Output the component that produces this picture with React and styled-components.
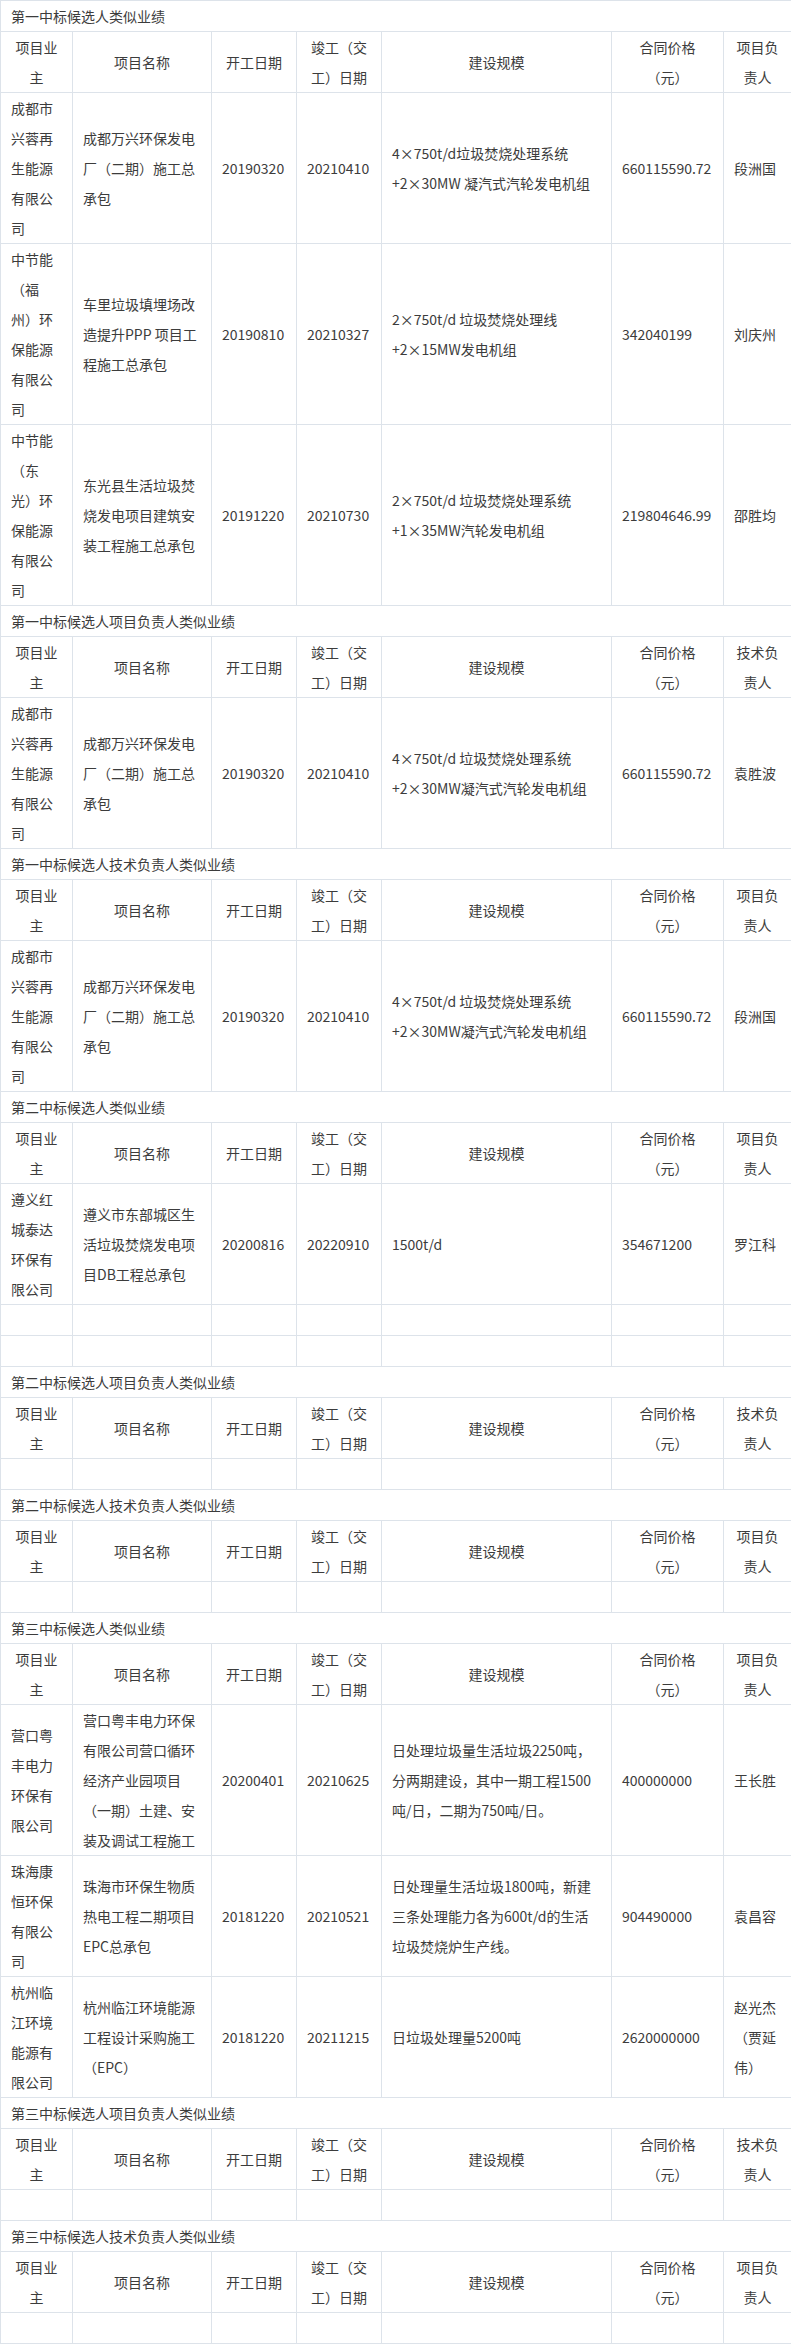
import React from "react";
import styled, { createGlobalStyle } from "styled-components";

const GlobalStyle = createGlobalStyle`
  body {
    margin: 0;
    background: #ffffff;
  }
`;

const Sheet = styled.table`
  width: 791px;
  table-layout: fixed;
  border-collapse: collapse;
  font-family: "Noto Sans CJK SC", "Noto Sans", sans-serif;
  font-size: 14px;
  line-height: 30px;
  color: #3c3c3c;
  background: #ffffff;
`;

const Col = styled.col`
  width: ${(props) => props.$w}px;
`;

const Cell = styled.td`
  border: 1px solid #dde3ea;
  padding: 0 10px;
  vertical-align: middle;
  text-align: ${(props) => (props.$head ? "center" : "left")};
`;

const TitleCell = styled.td`
  border: 1px solid #dde3ea;
  padding: 0 10px;
  height: 30px;
  text-align: left;
  white-space: nowrap;
`;

const BlankCell = styled.td`
  border: 1px solid #dde3ea;
  height: 30px;
  padding: 0;
`;

const WIDTHS = [72, 139, 85, 85, 230, 112, 68];

const Lines = ({ lines }) =>
  lines.map((line, i) => (
    <React.Fragment key={i}>
      {i > 0 && <br />}
      {line}
    </React.Fragment>
  ));

const HeadRow = ({ lead }) => {
  const heads = [
    ["项目业", "主"],
    ["项目名称"],
    ["开工日期"],
    ["竣工（交", "工）日期"],
    ["建设规模"],
    ["合同价格", "（元）"],
    [lead, "责人"],
  ];
  return (
    <tr>
      {heads.map((h, i) => (
        <Cell key={i} $head>
          <Lines lines={h} />
        </Cell>
      ))}
    </tr>
  );
};

const DataRow = ({ row }) => (
  <tr>
    <Cell>
      <Lines lines={row.owner} />
    </Cell>
    <Cell>
      <Lines lines={row.name} />
    </Cell>
    <Cell>{row.start}</Cell>
    <Cell>{row.end}</Cell>
    <Cell>
      <Lines lines={row.scale} />
    </Cell>
    <Cell>{row.price}</Cell>
    <Cell>
      <Lines lines={row.person} />
    </Cell>
  </tr>
);

const BlankRow = () => (
  <tr>
    {WIDTHS.map((w, i) => (
      <BlankCell key={i} />
    ))}
  </tr>
);

const chengdu = {
  owner: ["成都市", "兴蓉再", "生能源", "有限公", "司"],
  name: ["成都万兴环保发电", "厂（二期）施工总", "承包"],
  start: "20190320",
  end: "20210410",
  price: "660115590.72",
};

const sections = [
  {
    title: "第一中标候选人类似业绩",
    lead: "项目负",
    rows: [
      {
        ...chengdu,
        scale: ["4×750t/d垃圾焚烧处理系统", "+2×30MW 凝汽式汽轮发电机组"],
        person: ["段洲国"],
      },
      {
        owner: ["中节能", "（福", "州）环", "保能源", "有限公", "司"],
        name: ["车里垃圾填埋场改", "造提升PPP 项目工", "程施工总承包"],
        start: "20190810",
        end: "20210327",
        scale: ["2×750t/d 垃圾焚烧处理线", "+2×15MW发电机组"],
        price: "342040199",
        person: ["刘庆州"],
      },
      {
        owner: ["中节能", "（东", "光）环", "保能源", "有限公", "司"],
        name: ["东光县生活垃圾焚", "烧发电项目建筑安", "装工程施工总承包"],
        start: "20191220",
        end: "20210730",
        scale: ["2×750t/d 垃圾焚烧处理系统", "+1×35MW汽轮发电机组"],
        price: "219804646.99",
        person: ["邵胜均"],
      },
    ],
    blanks: 0,
  },
  {
    title: "第一中标候选人项目负责人类似业绩",
    lead: "技术负",
    rows: [
      {
        ...chengdu,
        scale: ["4×750t/d 垃圾焚烧处理系统", "+2×30MW凝汽式汽轮发电机组"],
        person: ["袁胜波"],
      },
    ],
    blanks: 0,
  },
  {
    title: "第一中标候选人技术负责人类似业绩",
    lead: "项目负",
    rows: [
      {
        ...chengdu,
        scale: ["4×750t/d 垃圾焚烧处理系统", "+2×30MW凝汽式汽轮发电机组"],
        person: ["段洲国"],
      },
    ],
    blanks: 0,
  },
  {
    title: "第二中标候选人类似业绩",
    lead: "项目负",
    rows: [
      {
        owner: ["遵义红", "城泰达", "环保有", "限公司"],
        name: ["遵义市东部城区生", "活垃圾焚烧发电项", "目DB工程总承包"],
        start: "20200816",
        end: "20220910",
        scale: ["1500t/d"],
        price: "354671200",
        person: ["罗江科"],
      },
    ],
    blanks: 2,
  },
  { title: "第二中标候选人项目负责人类似业绩", lead: "技术负", rows: [], blanks: 1 },
  { title: "第二中标候选人技术负责人类似业绩", lead: "项目负", rows: [], blanks: 1 },
  {
    title: "第三中标候选人类似业绩",
    lead: "项目负",
    rows: [
      {
        owner: ["营口粤", "丰电力", "环保有", "限公司"],
        name: [
          "营口粤丰电力环保",
          "有限公司营口循环",
          "经济产业园项目",
          "（一期）土建、安",
          "装及调试工程施工",
        ],
        start: "20200401",
        end: "20210625",
        scale: [
          "日处理垃圾量生活垃圾2250吨，",
          "分两期建设，其中一期工程1500",
          "吨/日，二期为750吨/日。",
        ],
        price: "400000000",
        person: ["王长胜"],
      },
      {
        owner: ["珠海康", "恒环保", "有限公", "司"],
        name: ["珠海市环保生物质", "热电工程二期项目", "EPC总承包"],
        start: "20181220",
        end: "20210521",
        scale: [
          "日处理量生活垃圾1800吨，新建",
          "三条处理能力各为600t/d的生活",
          "垃圾焚烧炉生产线。",
        ],
        price: "904490000",
        person: ["袁昌容"],
      },
      {
        owner: ["杭州临", "江环境", "能源有", "限公司"],
        name: ["杭州临江环境能源", "工程设计采购施工", "（EPC）"],
        start: "20181220",
        end: "20211215",
        scale: ["日垃圾处理量5200吨"],
        price: "2620000000",
        person: ["赵光杰", "（贾延", "伟）"],
      },
    ],
    blanks: 0,
  },
  { title: "第三中标候选人项目负责人类似业绩", lead: "技术负", rows: [], blanks: 1 },
  { title: "第三中标候选人技术负责人类似业绩", lead: "项目负", rows: [], blanks: 1 },
];

const App = () => (
  <>
    <GlobalStyle />
    <Sheet>
      <colgroup>
        {WIDTHS.map((w, i) => (
          <Col key={i} $w={w} />
        ))}
      </colgroup>
      <tbody>
        {sections.map((s, si) => (
          <React.Fragment key={si}>
            <tr>
              <TitleCell colSpan={7}>{s.title}</TitleCell>
            </tr>
            <HeadRow lead={s.lead} />
            {s.rows.map((r, ri) => (
              <DataRow key={ri} row={r} />
            ))}
            {Array.from({ length: s.blanks }).map((_, bi) => (
              <BlankRow key={bi} />
            ))}
          </React.Fragment>
        ))}
      </tbody>
    </Sheet>
  </>
);

export default App;
